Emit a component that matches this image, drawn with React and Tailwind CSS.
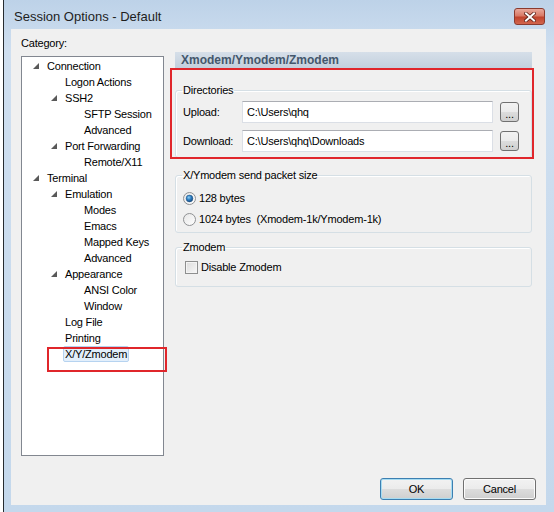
import React from "react";

// Tree items: [level, label, expanded, selected]
const treeItems = [
  [0, "Connection", true],
  [1, "Logon Actions"],
  [1, "SSH2", true],
  [2, "SFTP Session"],
  [2, "Advanced"],
  [1, "Port Forwarding", true],
  [2, "Remote/X11"],
  [0, "Terminal", true],
  [1, "Emulation", true],
  [2, "Modes"],
  [2, "Emacs"],
  [2, "Mapped Keys"],
  [2, "Advanced"],
  [1, "Appearance", true],
  [2, "ANSI Color"],
  [2, "Window"],
  [1, "Log File"],
  [1, "Printing"],
  [1, "X/Y/Zmodem", false, true],
];

const indent = ["pl-[11px]", "pl-[29px]", "pl-[48px]"];

const btnGradient =
  "bg-[linear-gradient(to_bottom,#f2f2f2_0%,#ebebeb_50%,#dddddd_50%,#cfcfcf_100%)]";

function Arrow() {
  return (
    <svg width="6" height="6" viewBox="0 0 6 6">
      <polygon points="6,0 6,6 0,6" fill="#595959" />
    </svg>
  );
}

function CloseButton() {
  return (
    <div className="mt-[8px] w-[31px] h-[17px] rounded-[3px] border border-[#8b3a2e] bg-[linear-gradient(to_bottom,#e9a99c_0%,#d97a67_45%,#c1442e_55%,#d2664d_100%)] flex items-center justify-center">
      <svg width="12" height="10" viewBox="0 0 12 10">
        <path
          d="M2 1.5 L10 8.5 M10 1.5 L2 8.5"
          stroke="#5b2118"
          strokeWidth="3.6"
          strokeLinecap="square"
        />
        <path
          d="M2 1.5 L10 8.5 M10 1.5 L2 8.5"
          stroke="#ffffff"
          strokeWidth="2"
          strokeLinecap="square"
        />
      </svg>
    </div>
  );
}

function Radio({ checked }) {
  return (
    <svg width="13" height="13" viewBox="0 0 13 13">
      <defs>
        <linearGradient id="rg" x1="0" y1="0" x2="1" y2="1">
          <stop offset="0" stopColor="#e6e6e6" />
          <stop offset="1" stopColor="#ffffff" />
        </linearGradient>
        <radialGradient id="dot" cx="0.4" cy="0.35" r="0.7">
          <stop offset="0" stopColor="#8fd0f5" />
          <stop offset="0.5" stopColor="#2b7bbf" />
          <stop offset="1" stopColor="#17467a" />
        </radialGradient>
      </defs>
      <circle cx="6.5" cy="6.5" r="6" fill="url(#rg)" stroke="#8f9193" strokeWidth="1" />
      {checked && <circle cx="6.5" cy="6.5" r="3.4" fill="url(#dot)" stroke="#1c4f80" strokeWidth="0.5" />}
    </svg>
  );
}

function Checkbox() {
  return (
    <div className="w-[13px] h-[13px] border border-[#8e8f8f] bg-[linear-gradient(135deg,#dcdcdc,#f7f7f7)] shadow-[inset_0_0_0_1px_#f4f4f4]" />
  );
}

function Field({ label, value }) {
  return (
    <div className="flex items-center h-[22px]">
      <span className="w-[59px]">{label}</span>
      <div className="w-[251px] h-[22px] border border-[#dbdfe6] border-t-[#abadb3] bg-white flex items-center pl-[4px]">
        {value}
      </div>
      <button
        className={`ml-[7px] w-[19px] h-[20px] rounded-[3px] border border-[#707070] ${btnGradient} flex items-end justify-center pb-[3px] leading-[8px]`}
      >
        ...
      </button>
    </div>
  );
}

function Group({ title, className, children }) {
  return (
    <fieldset
      className={`border border-[#d5dfe5] rounded-[3px] pl-[7px] shadow-[inset_1px_1px_0_#ffffff] ${className}`}
    >
      <legend className="-ml-[1px] px-[1px] leading-[15px]">{title}</legend>
      {children}
    </fieldset>
  );
}

export default function App() {
  return (
    <div className="w-[554px] h-[512px] bg-white flex overflow-hidden text-[11px] tracking-[-0.2px] text-black font-['Liberation_Sans',Arial,sans-serif]">
      <div className="w-[3px]" />
      {/* Aero window frame */}
      <div className="flex-1 border-l border-[#262b30] bg-[linear-gradient(to_bottom,#bdd2e8_0%,#cfdff0_10%,#c4d8ec_100%)] flex flex-col pl-[7px] pr-[8px] pb-[7px]">
        <div className="h-[29px] flex justify-between items-start">
          <span className="mt-[8px] ml-[3px] text-[13px] tracking-normal leading-[18px] text-[#1e1e1e]">
            Session Options - Default
          </span>
          <div className="mr-[1px]">
            <CloseButton />
          </div>
        </div>

        {/* Client area */}
        <div className="relative flex-1 bg-[#f0f0f0] flex flex-col px-[10px] pb-[5px]">
          <div className="flex">
            {/* Category tree */}
            <div className="w-[143px] flex flex-col">
              <div className="h-[27px] pt-[6px] leading-[16px]">Category:</div>
              <div className="h-[400px] border border-[#828790] bg-white pt-[1px]">
                {treeItems.map(([level, label, expanded, selected], i) => (
                  <div key={i} className={`h-[16px] flex items-center ${indent[level]}`}>
                    <div className="w-[12px] flex items-center">{expanded && <Arrow />}</div>
                    <span
                      className={`px-[1px] h-[16px] leading-[14px] border rounded-[2px] whitespace-nowrap ${
                        selected
                          ? "border-[#b6d3f0] bg-[#e3effb]"
                          : "border-transparent"
                      }`}
                    >
                      {label}
                    </span>
                  </div>
                ))}
              </div>
            </div>

            {/* Options panel */}
            <div className="ml-[11px] w-[357px] pt-[23px] flex flex-col">
              <div className="h-[16px] pl-[6px] flex items-center bg-[linear-gradient(to_bottom,#d6dfe9,#c3d0dd)] text-[12px] tracking-normal font-bold text-[#44576c]">
                Xmodem/Ymodem/Zmodem
              </div>

              <Group title="Directories" className="mt-[15px] pb-[5px]">
                <div className="mt-[3px]">
                  <Field label="Upload:" value="C:\Users\qhq" />
                </div>
                <div className="mt-[7px]">
                  <Field label="Download:" value="C:\Users\qhq\Downloads" />
                </div>
              </Group>

              <Group title="X/Ymodem send packet size" className="mt-[10px] pb-[5px]">
                <div className="mt-[7px] h-[16px] flex items-center">
                  <Radio checked />
                  <span className="ml-[3px]">128 bytes</span>
                </div>
                <div className="mt-[5px] h-[16px] flex items-center">
                  <Radio />
                  <span className="ml-[3px] whitespace-pre">1024 bytes  (Xmodem-1k/Ymodem-1k)</span>
                </div>
              </Group>

              <Group title="Zmodem" className="mt-[7px] pb-[11px]">
                <div className="mt-[4px] h-[16px] flex items-center pl-[2px]">
                  <Checkbox />
                  <span className="ml-[3px]">Disable Zmodem</span>
                </div>
              </Group>
            </div>
          </div>

          {/* Dialog buttons */}
          <div className="mt-auto flex justify-end gap-[10px]">
            <button
              className={`w-[73px] h-[22px] rounded-[3px] border border-[#3c7fb1] ${btnGradient} shadow-[inset_0_0_0_1px_#a7dcf2]`}
            >
              OK
            </button>
            <button className={`w-[73px] h-[22px] rounded-[3px] border border-[#707070] ${btnGradient} shadow-[inset_0_0_0_1px_#fcfcfc]`}>
              Cancel
            </button>
          </div>

          {/* Red annotation boxes */}
          <div className="absolute left-[159px] top-[39px] w-[364px] h-[91px] border-2 border-[#e0262b]" />
          <div className="absolute left-[36px] top-[318px] w-[120px] h-[25px] border-2 border-[#e0262b]" />
        </div>
      </div>
    </div>
  );
}
